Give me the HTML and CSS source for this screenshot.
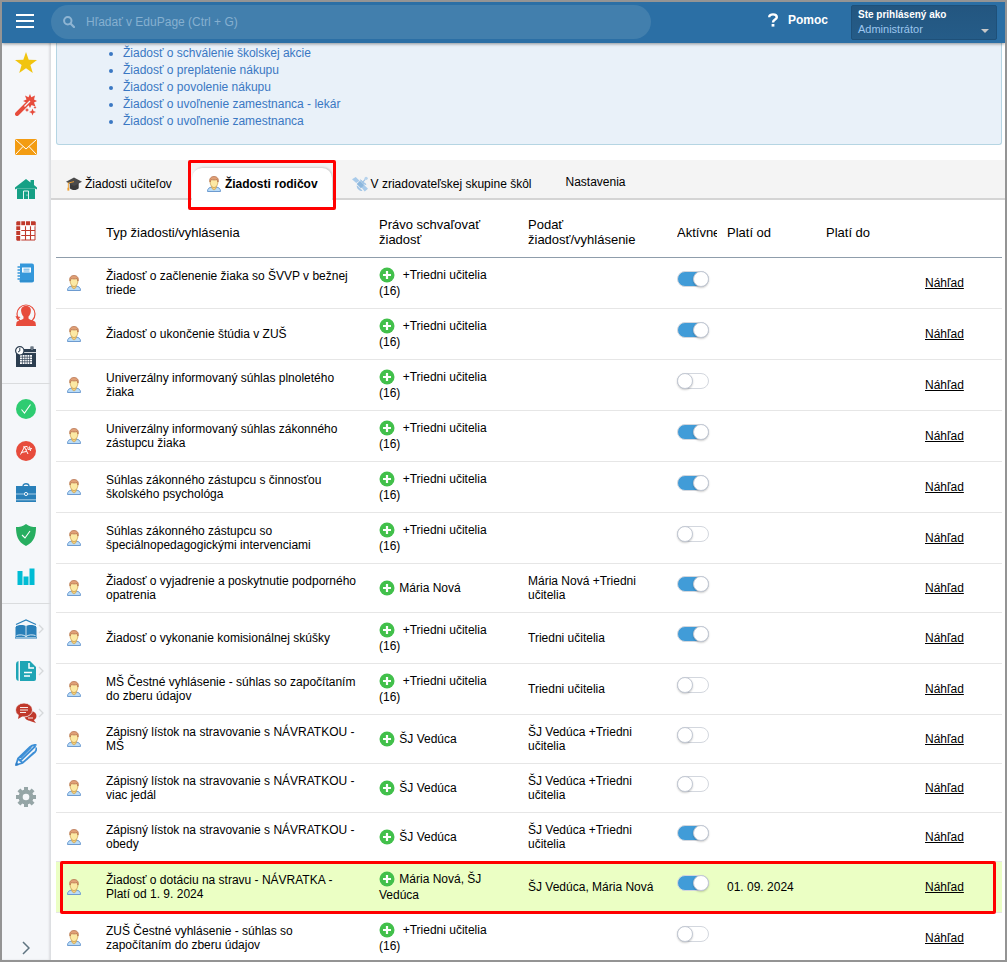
FILE: index.html
```
<!DOCTYPE html>
<html lang="sk">
<head>
    <meta charset="UTF-8">
    <meta name="viewport" content="width=device-width, initial-scale=1.0">
    <title>EduPage - Žiadosti rodičov</title>
    <link rel="stylesheet" href="styles.css">
</head>
<body>
    <!-- shared icons -->
    <svg class="sprite" aria-hidden="true">
        <symbol id="person" viewBox="0 0 16 16">
            <path d="M1.500 15.500c0-3 1.500-4 4.500-4.500h4c3 .5 4.500 1.500 4.500 4.500z" fill="#b9dcf8" stroke="#6d9bd0"/>
            <path d="M5.500 10.500h5l-.5 2-2 1.500-2-1.500z" fill="#f3cf7c" stroke="#c9963e" stroke-width=".6"/>
            <path d="M4 4.500c0-4 8-4 8 0 0 4-1.500 7-4 7s-4-3-4-7z" fill="#fce9a4" stroke="#c99a4b" stroke-width=".8"/>
            <path d="M4 6C3 2 5.500.5 8 .5S13 2 12 6c-.5-1-.7-1.500-1-2.500-1.700.6-4 .6-5.600 0C5 4.500 4.500 5 4 6z" fill="#e0a077" stroke="#b26b48" stroke-width=".7"/>
        </symbol>
        <symbol id="plus" viewBox="0 0 16 16">
            <circle cx="8" cy="8" r="7.500" fill="#42c04b"/>
            <path d="M8 4v8M4 8h8" stroke="#fff" stroke-width="2.200"/>
        </symbol>
        <symbol id="more" viewBox="0 0 6 10">
            <path d="M1 1l4 4-4 4" fill="none" stroke="#d5d8da" stroke-width="1.300"/>
        </symbol>
    </svg>

    <header class="topbar">
        <button class="menu-btn" aria-label="Menu"><span></span><span></span><span></span></button>
        <div class="search">
            <svg width="12" height="12" viewBox="0 0 12 12"><circle cx="4.800" cy="4.800" r="3.700" fill="none" stroke="#8fb5d3" stroke-width="2"/><path d="M7.500 7.500l3.500 3.500" stroke="#8fb5d3" stroke-width="2.200" stroke-linecap="round"/></svg>
            <input type="text" placeholder="Hľadať v EduPage (Ctrl + G)" aria-label="Hľadať v EduPage">
        </div>
        <a class="help" href="#">
            <svg width="10" height="14" viewBox="0 0 10 14"><path d="M1.200 4.200C1.200.4 8.800.4 8.800 4.200 8.800 6.600 5 6.500 5 9.500" fill="none" stroke="#fff" stroke-width="2.400"/><rect x="3.600" y="11" width="2.800" height="2.600" fill="#fff"/></svg>
            Pomoc
        </a>
        <button class="user">
            <strong>Ste prihlásený ako</strong>
            <span class="user-name">Administrátor</span>
        </button>
    </header>

    <div class="layout">
        <nav class="sidebar">
            <div class="group">
                <a href="#" aria-label="Obľúbené"><svg viewBox="0 0 22 22"><path d="M11 0l2.700 7.800 8.300.2-6.600 5 2.400 8-6.800-4.700L4.200 21l2.400-8L0 8l8.300-.2z" fill="#f1c40f"/></svg></a>
                <a href="#" aria-label="Sprievodca"><svg viewBox="0 0 22 22"><path d="M2 20L13 9" stroke="#e74c3c" stroke-width="4" stroke-linecap="round"/><path d="M15 0l1.300 3.200L20 1.500l-1 4 3 1.500-3 1.500 1.500 4-4-1.500-1.500 3-1.500-3-3 1 1-3.500L8 7l3.500-1.500L10 1.500l3.500 1.700z" fill="#e74c3c"/><path d="M9.500 12.500L15 7" stroke="#f5f7fa" stroke-width="1.200"/><path d="M17.500 14.500l1 2.500 2.500 1-2.500 1-1 2.500-1-2.500-2.500-1 2.500-1zM12 14l.7 1.300 1.300.7-1.300.7L12 18l-.7-1.300L10 16l1.300-.7zM20 12l.5 1 1 .5-1 .5-.5 1-.5-1-1-.5 1-.5z" fill="#e74c3c"/></svg></a>
                <a href="#" aria-label="Správy"><svg viewBox="0 0 22 22"><rect y="3" width="22" height="16" fill="#f39c12"/><path d="M.5 3.500L11 13 21.500 3.500M.5 18.500L8 10.500M21.500 18.500L14 10.500" fill="none" stroke="#fff" stroke-width="1"/></svg></a>
                <a href="#" aria-label="Škola"><svg viewBox="0 0 22 22"><path d="M2 10.500h18V21H2z" fill="#16a085"/><path d="M0 11.500v-2L11 1l4.500 3.500V2H19v5l3 2.500v2l-2-1H2z" fill="#16a085"/><path d="M8.500 21v-8h5v8" fill="none" stroke="#fff" stroke-width=".9"/><circle cx="12" cy="17" r=".6" fill="#fff"/></svg></a>
                <a href="#" aria-label="Rozvrh"><svg viewBox="0 0 22 22"><path d="M2 2h18v18H2z" fill="#fff" stroke="#c0392b"/><path d="M1.500 1.500h19v4h-19zM1.500 1.500h4v19h-4z" fill="#c0392b"/><path d="M6 10.500h14M6 15.500h14M10.500 6v14M15.500 6v14" stroke="#c0392b" stroke-width="1.100"/><path d="M1 5.800h19.500M1 10.500h5M1 15.500h5M5.800 1v20M10.500 1v4.500M15.500 1v4.500" stroke="#fff" stroke-width=".9"/></svg></a>
                <a href="#" aria-label="Triedna kniha"><svg viewBox="0 0 22 22"><path d="M5 1.500h12a2 2 0 0 1 2 2v15a2 2 0 0 1-2 2H5z" fill="#3498db"/><path d="M2.500 5H6M2.500 8H6M2.500 11H6M2.500 14H6M2.500 17H6" stroke="#3498db" stroke-width="1.400"/><path d="M7 5.500h9v5H7z" fill="#fff"/><path d="M8.500 7.200h6M8.500 9h6" stroke="#3498db" stroke-width=".8"/><path d="M4 19h14.500" stroke="#2980b9" stroke-width=".7"/></svg></a>
                <a href="#" aria-label="Dochádzka"><svg viewBox="0 0 22 22"><circle cx="11" cy="10" r="9" fill="none" stroke="#e74c3c" stroke-width="1.200"/><path d="M11 2c-4 0-5.300 2.500-4.800 5.500.3 2.500 1.300 4 2.300 5v2c-1 1.500-6.500 2-7 4L1 22h20l-.5-3.500c-.5-2-6-2.500-7-4v-2c1-1 2-2.500 2.300-5C16.300 4.500 15 2 11 2z" fill="#e74c3c"/><path d="M.5 12l1.800 4 3.200-3z" fill="#e74c3c"/></svg></a>
                <a href="#" aria-label="Kalendár"><svg viewBox="0 0 22 22"><path d="M1 3h20v18H1z" fill="#2c3e50"/><path d="M9 6.500h12" stroke="#fff" stroke-width=".8"/><path d="M17 .5v4" stroke="#2c3e50" stroke-width="3"/><path d="M17 1v3" stroke="#aab2b9" stroke-width="1"/><path d="M5 9h12v9H5z" fill="#fff"/><path d="M5 11.200h12M5 13.500h12M5 15.800h12M7.400 9v9M9.800 9v9M12.200 9v9M14.600 9v9" stroke="#2c3e50" stroke-width=".7"/><circle cx="4.800" cy="4.800" r="4.200" fill="#fff" stroke="#2c3e50" stroke-width="1.200"/><path d="M4.800 2v3L3 6" fill="none" stroke="#2c3e50"/></svg></a>
            </div>
            <div class="group">
                <a href="#" aria-label="Schválené"><svg viewBox="0 0 22 22"><circle cx="11" cy="11" r="10" fill="#2ecc71"/><path d="M6.500 11.500l3 3.500 6-8.500" fill="none" stroke="#fff" stroke-width="1.100"/></svg></a>
                <a href="#" aria-label="Známky"><svg viewBox="0 0 22 22"><circle cx="11" cy="11" r="10" fill="#e74c3c"/><path d="M5.500 14.500L9.500 7l3.500 7M6 12.500l5.500-1M13 9.500l4-1M14.500 6.500l1 4.500M8 7l4-.5c2 1 1 2.500-1 3.500" fill="none" stroke="#fff" stroke-width="1"/></svg></a>
                <a href="#" aria-label="Agenda"><svg viewBox="0 0 22 22"><path d="M8 4c0-3 6-3 6 0" fill="none" stroke="#2980b9" stroke-width="1.300"/><path d="M1 4h20v16H1z" fill="#2980b9"/><path d="M1 12h8.500M12.500 12H21M1 17.800h20" stroke="#c8deee" stroke-width=".8"/><circle cx="11" cy="12" r="1.600" fill="#2980b9" stroke="#fff" stroke-width=".9"/></svg></a>
                <a href="#" aria-label="Bezpečnosť"><svg viewBox="0 0 22 22"><path d="M11 0c3 2.500 6.500 3 10 3 0 8-1.500 15-10 19C2.500 18 1 11 1 3c3.500 0 7-.5 10-3z" fill="#27ae60"/><path d="M7 11l3 3 5-7" fill="none" stroke="#fff" stroke-width="1.100"/></svg></a>
                <a href="#" aria-label="Štatistiky"><svg viewBox="0 0 22 22"><path d="M2.500 5h5v14h-5zM8.500 10.500h5V19h-5zM14.500 2.500h5V19h-5z" fill="#00bcd4"/></svg></a>
            </div>
            <div class="group">
                <a href="#" aria-label="Učivo"><svg viewBox="0 0 22 22"><path d="M1 6.500L11 2l10 4.500" fill="none" stroke="#2980b9" stroke-width="1.200"/><path d="M1 8c3-1.500 8-1.500 10 0 2-1.500 7-1.500 10 0v11H1z" fill="#2980b9"/><path d="M11 8v11M1.500 17.500c3-1 7-1 9.500 1 2.500-2 6.500-2 9.500-1" fill="none" stroke="#fff" stroke-width=".8"/><path d="M0 9v11h22V9" fill="none" stroke="#2980b9" stroke-width="1"/></svg><svg class="more"><use href="#more"/></svg></a>
                <a href="#" aria-label="Testy"><svg viewBox="0 0 22 22"><path d="M3.500 1v20A3 3 0 0 1 1 18V4a3 3 0 0 1 2.500-3z" fill="#1fa5b5"/><path d="M5 1h10l6 6v12a2 2 0 0 1-2 2H5z" fill="#1fa5b5"/><path d="M14 3v5h5" fill="none" stroke="#fff" stroke-width="1.500"/><path d="M9 12.500h8M9 16h6" stroke="#fff" stroke-width="1.600"/></svg><svg class="more"><use href="#more"/></svg></a>
                <a href="#" aria-label="Komunikácia"><svg viewBox="0 0 22 22"><ellipse cx="15.500" cy="14" rx="6" ry="5" fill="#c0392b"/><path d="M18 17l3 4-6-2z" fill="#c0392b"/><ellipse cx="9" cy="8" rx="8.500" ry="7" fill="#c0392b" stroke="#f5f7fa" stroke-width=".8"/><path d="M4 12l-1 5 5-3z" fill="#c0392b"/><path d="M5 5.500h8M5 8h8M5 10.500h6M13 16h5" stroke="#fff" stroke-width=".9"/></svg><svg class="more"><use href="#more"/></svg></a>
                <a href="#" aria-label="Upraviť"><svg viewBox="0 0 22 22"><path d="M1 21l2-6.500L15 3C17 1 19 .8 21.500.8M1 21l6.500-2L20 8c1.500-1.500 1.500-2.500 1.500-4.500M3 14.500l4.500 4.500M5.500 16.500L20.500 2M11.500 15.500L19 8.500" fill="none" stroke="#3d8fd6" stroke-width="1.800"/><path d="M4 13.500L15 3l2 .5L6 14.500z" fill="#3d8fd6"/><path d="M0 22l1.200-4 2.800 3z" fill="#2f7cc4"/></svg></a>
                <a href="#" aria-label="Nastavenia"><svg viewBox="0 0 22 22"><g fill="#95a5a6"><circle cx="11" cy="11" r="7.500"/><path d="M9 1h4v20H9z"/><path d="M1 9h20v4H1z"/><path d="M2.500 5.300l2.800-2.800 14.200 14.200-2.800 2.800z"/><path d="M16.700 2.500l2.800 2.800L5.300 19.500l-2.800-2.800z"/></g><circle cx="11" cy="11" r="3.300" fill="#f5f7fa"/></svg></a>
            </div>
            <button class="expand" aria-label="Rozbaliť menu"><svg width="8" height="14" viewBox="0 0 8 14"><path d="M1 1l6 6-6 6" fill="none" stroke="#5f7480" stroke-width="1.500"/></svg></button>
        </nav>

        <main>
            <ul class="links">
                <li><a href="#">Žiadosť o schválenie školskej akcie</a></li>
                <li><a href="#">Žiadosť o preplatenie nákupu</a></li>
                <li><a href="#">Žiadosť o povolenie nákupu</a></li>
                <li><a href="#">Žiadosť o uvoľnenie zamestnanca - lekár</a></li>
                <li><a href="#">Žiadosť o uvoľnenie zamestnanca</a></li>
            </ul>

            <div class="tabs">
                <a class="tab" href="#">
                    <svg width="16" height="16" viewBox="0 0 17 16"><path d="M4 7v5.500c2 2.500 7.500 2.500 9.500 0V7z" fill="#3a3a3a"/><path d="M0 5.500L8.500 1 17 5.500 8.500 10z" fill="#4a4a4a"/><path d="M8.500 5.500L2.500 7v6" fill="none" stroke="#f0a030" stroke-width="1"/><path d="M1.500 12h2v3h-2z" fill="#f0a030"/></svg>
                    Žiadosti učiteľov
                </a>
                <a class="tab active" href="#"><svg width="16" height="16"><use href="#person"/></svg>Žiadosti rodičov</a>
                <a class="tab" href="#">
                    <svg width="16" height="16" viewBox="0 0 17 16"><path d="M0 3l4-2.500 4 4L4.500 7zM9.500 11l3.500-2 4 4-3.500 3z" fill="#a9cbea"/><path d="M5 8l3.500-3.500 4.500 4.500-3.500 3.500z" fill="#8db8de"/><path d="M5.500 10c0 3 2.500 5 5 5zM9 3.500c1.500 3 3 4.500 6 5z" fill="#a9cbea" stroke="#9fc3e4"/><path d="M11 6.500l3-3.500" stroke="#9fc3e4" stroke-width="1.300"/><circle cx="15" cy="2" r="1.700" fill="#b5d2ec"/></svg>
                    V zriadovateľskej skupine škôl
                </a>
                <a class="tab plain" href="#">Nastavenia</a>
            </div>

            <table class="requests">
                <colgroup>
                    <col class="col-icon"><col><col class="col-people"><col class="col-people"><col class="col-active"><col class="col-date"><col class="col-date"><col class="col-view">
                </colgroup>
                <thead>
                    <tr>
                        <th></th>
                        <th>Typ žiadosti/vyhlásenia</th>
                        <th>Právo schvaľovať žiadosť</th>
                        <th>Podať žiadosť/vyhlásenie</th>
                        <th><div class="clip">Aktívne</div></th>
                        <th>Platí od</th>
                        <th>Platí do</th>
                        <th></th>
                    </tr>
                </thead>
                <tbody>
                    <tr>
                        <td class="icon"><svg><use href="#person"/></svg></td>
                        <td class="name">Žiadosť o začlenenie žiaka so ŠVVP v bežnej triede</td>
                        <td class="people"><svg><use href="#plus"/></svg> &nbsp;+Triedni učitelia<br>(16)</td>
                        <td></td>
                        <td><input type="checkbox" class="switch" aria-label="Aktívne" checked></td>
                        <td></td><td></td>
                        <td><a href="#">Náhľad</a></td>
                    </tr>
                    <tr>
                        <td class="icon"><svg><use href="#person"/></svg></td>
                        <td class="name">Žiadosť o ukončenie štúdia v ZUŠ</td>
                        <td class="people"><svg><use href="#plus"/></svg> &nbsp;+Triedni učitelia<br>(16)</td>
                        <td></td>
                        <td><input type="checkbox" class="switch" aria-label="Aktívne" checked></td>
                        <td></td><td></td>
                        <td><a href="#">Náhľad</a></td>
                    </tr>
                    <tr>
                        <td class="icon"><svg><use href="#person"/></svg></td>
                        <td class="name">Univerzálny informovaný súhlas plnoletého žiaka</td>
                        <td class="people"><svg><use href="#plus"/></svg> &nbsp;+Triedni učitelia<br>(16)</td>
                        <td></td>
                        <td><input type="checkbox" class="switch" aria-label="Aktívne"></td>
                        <td></td><td></td>
                        <td><a href="#">Náhľad</a></td>
                    </tr>
                    <tr>
                        <td class="icon"><svg><use href="#person"/></svg></td>
                        <td class="name">Univerzálny informovaný súhlas zákonného zástupcu žiaka</td>
                        <td class="people"><svg><use href="#plus"/></svg> &nbsp;+Triedni učitelia<br>(16)</td>
                        <td></td>
                        <td><input type="checkbox" class="switch" aria-label="Aktívne" checked></td>
                        <td></td><td></td>
                        <td><a href="#">Náhľad</a></td>
                    </tr>
                    <tr>
                        <td class="icon"><svg><use href="#person"/></svg></td>
                        <td class="name">Súhlas zákonného zástupcu s činnosťou školského psychológa</td>
                        <td class="people"><svg><use href="#plus"/></svg> &nbsp;+Triedni učitelia<br>(16)</td>
                        <td></td>
                        <td><input type="checkbox" class="switch" aria-label="Aktívne" checked></td>
                        <td></td><td></td>
                        <td><a href="#">Náhľad</a></td>
                    </tr>
                    <tr>
                        <td class="icon"><svg><use href="#person"/></svg></td>
                        <td class="name">Súhlas zákonného zástupcu so špeciálnopedagogickými intervenciami</td>
                        <td class="people"><svg><use href="#plus"/></svg> &nbsp;+Triedni učitelia<br>(16)</td>
                        <td></td>
                        <td><input type="checkbox" class="switch" aria-label="Aktívne"></td>
                        <td></td><td></td>
                        <td><a href="#">Náhľad</a></td>
                    </tr>
                    <tr>
                        <td class="icon"><svg><use href="#person"/></svg></td>
                        <td class="name">Žiadosť o vyjadrenie a poskytnutie podporného opatrenia</td>
                        <td class="people"><svg><use href="#plus"/></svg> Mária Nová</td>
                        <td>Mária Nová +Triedni učitelia</td>
                        <td><input type="checkbox" class="switch" aria-label="Aktívne" checked></td>
                        <td></td><td></td>
                        <td><a href="#">Náhľad</a></td>
                    </tr>
                    <tr>
                        <td class="icon"><svg><use href="#person"/></svg></td>
                        <td class="name">Žiadosť o vykonanie komisionálnej skúšky</td>
                        <td class="people"><svg><use href="#plus"/></svg> &nbsp;+Triedni učitelia<br>(16)</td>
                        <td>Triedni učitelia</td>
                        <td><input type="checkbox" class="switch" aria-label="Aktívne" checked></td>
                        <td></td><td></td>
                        <td><a href="#">Náhľad</a></td>
                    </tr>
                    <tr>
                        <td class="icon"><svg><use href="#person"/></svg></td>
                        <td class="name">MŠ Čestné vyhlásenie - súhlas so započítaním do zberu údajov</td>
                        <td class="people"><svg><use href="#plus"/></svg> &nbsp;+Triedni učitelia<br>(16)</td>
                        <td>Triedni učitelia</td>
                        <td><input type="checkbox" class="switch" aria-label="Aktívne"></td>
                        <td></td><td></td>
                        <td><a href="#">Náhľad</a></td>
                    </tr>
                    <tr>
                        <td class="icon"><svg><use href="#person"/></svg></td>
                        <td class="name">Zápisný lístok na stravovanie s NÁVRATKOU - MŠ</td>
                        <td class="people"><svg><use href="#plus"/></svg> ŠJ Vedúca</td>
                        <td>ŠJ Vedúca +Triedni učitelia</td>
                        <td><input type="checkbox" class="switch" aria-label="Aktívne"></td>
                        <td></td><td></td>
                        <td><a href="#">Náhľad</a></td>
                    </tr>
                    <tr>
                        <td class="icon"><svg><use href="#person"/></svg></td>
                        <td class="name">Zápisný lístok na stravovanie s NÁVRATKOU - viac jedál</td>
                        <td class="people"><svg><use href="#plus"/></svg> ŠJ Vedúca</td>
                        <td>ŠJ Vedúca +Triedni učitelia</td>
                        <td><input type="checkbox" class="switch" aria-label="Aktívne"></td>
                        <td></td><td></td>
                        <td><a href="#">Náhľad</a></td>
                    </tr>
                    <tr>
                        <td class="icon"><svg><use href="#person"/></svg></td>
                        <td class="name">Zápisný lístok na stravovanie s NÁVRATKOU - obedy</td>
                        <td class="people"><svg><use href="#plus"/></svg> ŠJ Vedúca</td>
                        <td>ŠJ Vedúca +Triedni učitelia</td>
                        <td><input type="checkbox" class="switch" aria-label="Aktívne" checked></td>
                        <td></td><td></td>
                        <td><a href="#">Náhľad</a></td>
                    </tr>
                    <tr class="marked">
                        <td class="icon"><svg><use href="#person"/></svg></td>
                        <td class="name">Žiadosť o dotáciu na stravu - NÁVRATKA - Platí od 1. 9. 2024</td>
                        <td class="people"><svg><use href="#plus"/></svg> Mária Nová, ŠJ Vedúca</td>
                        <td>ŠJ Vedúca, Mária Nová</td>
                        <td><input type="checkbox" class="switch" aria-label="Aktívne" checked></td>
                        <td>01. 09. 2024</td><td></td>
                        <td><a href="#">Náhľad</a></td>
                    </tr>
                    <tr>
                        <td class="icon"><svg><use href="#person"/></svg></td>
                        <td class="name">ZUŠ Čestné vyhlásenie - súhlas so započítaním do zberu údajov</td>
                        <td class="people"><svg><use href="#plus"/></svg> &nbsp;+Triedni učitelia<br>(16)</td>
                        <td></td>
                        <td><input type="checkbox" class="switch" aria-label="Aktívne"></td>
                        <td></td><td></td>
                        <td><a href="#">Náhľad</a></td>
                    </tr>
                </tbody>
            </table>
        </main>
    </div>
</body>
</html>
```

FILE: styles.css
```
*,
*::before,
*::after {
    box-sizing: border-box;
}

body {
    margin: 0;
    height: 100vh;
    display: flex;
    flex-direction: column;
    overflow: hidden;
    border: 2px solid #949494;
    background-color: #fff;
    color: #000;
    font-family: "Liberation Sans", Arial, sans-serif;
    font-size: 12px;
    line-height: 14px;
}

a {
    color: inherit;
}

button {
    border: none;
    background: none;
    padding: 0;
    font-family: inherit;
    cursor: pointer;
}

.sprite {
    display: none;
}

/* top bar */
.topbar {
    display: flex;
    align-items: center;
    height: 40px;
    flex-shrink: 0;
    padding-right: 8px;
    background-color: #2b6fa5;
    box-shadow: 0 1px 0 #2b6fa5, 0 2px 3px rgba(0, 0, 0, 0.4);
    position: relative;
    z-index: 2;
}

.menu-btn {
    width: 49px;
    padding: 0 17px 3px 14px;
    display: flex;
    flex-direction: column;
    gap: 4px;
}

.menu-btn span {
    height: 2px;
    background-color: #fff;
}

.search {
    display: flex;
    align-items: center;
    gap: 11px;
    flex: 0 1 600px;
    height: 34px;
    padding: 0 12px;
    border-radius: 17px;
    background-color: #427fad;
}

.search input {
    flex: 1;
    border: none;
    outline: none;
    background: none;
    padding: 0;
    color: #fff;
    font-family: inherit;
    font-size: 12px;
}

.search input::placeholder {
    color: #86b0d0;
    opacity: 1;
}

.help {
    display: flex;
    align-items: center;
    gap: 10px;
    margin-left: auto;
    margin-right: 23px;
    padding-bottom: 4px;
    color: #fff;
    font-weight: bold;
    text-decoration: none;
}

.user {
    position: relative;
    width: 146px;
    height: 35px;
    padding: 0 6px;
    border: 1px solid #1e5079;
    border-radius: 2px;
    background-color: #24598a;
    background-image: linear-gradient(#235680, #255c88);
    color: #fff;
    text-align: left;
    line-height: 14px;
}

.user strong {
    display: block;
    font-size: 10px;
}

.user-name {
    display: block;
    color: #9cc6ee;
    font-size: 11px;
}

.user::after {
    content: "";
    position: absolute;
    right: 7px;
    bottom: 6px;
    border: 4px solid transparent;
    border-top-color: #c8c8c8;
    border-bottom: none;
}

/* sidebar */
.layout {
    display: flex;
    flex: 1;
    min-height: 0;
}

.sidebar {
    display: flex;
    flex-direction: column;
    width: 49px;
    flex-shrink: 0;
    background-color: #f5f7fa;
    box-shadow: inset -2px 0 2px #dcdee1;
}

.group {
    padding: 4px 0 5px;
    border-bottom: 1px solid #dadcde;
}

.group:first-child {
    padding-top: 0;
}

.group:last-of-type {
    border-bottom: none;
}

.group a {
    display: flex;
    align-items: center;
    height: 42px;
    padding-left: 13px;
}

.group svg {
    width: 22px;
    height: 22px;
    flex-shrink: 0;
}

.group .more {
    width: 6px;
    height: 10px;
    margin-left: 1px;
}

.expand {
    margin-top: auto;
    padding-right: 2px;
    height: 22px;
}

/* content */
main {
    flex: 1;
    min-width: 0;
    overflow: hidden;
}

.links {
    margin: 0 3px 15px 5px;
    padding: 3px 0 14px 66px;
    border: 1px solid #b5d5e3;
    border-top: none;
    border-radius: 0 0 3px 3px;
    background-color: #e9f1f9;
    color: #3a78c3;
    line-height: 17px;
}

.links a {
    text-decoration: none;
}

.tabs {
    display: flex;
    align-items: flex-end;
    gap: 6px;
    height: 40px;
    padding-left: 1px;
    background-color: #f4f4f4;
    box-shadow: inset 0 -2px 0 #d4d4d4;
}

.tab {
    display: flex;
    align-items: center;
    gap: 3px;
    height: 32px;
    padding: 0 14px;
    text-decoration: none;
    white-space: nowrap;
}

.tab.plain {
    padding-bottom: 4px;
}

.tab.active {
    position: relative;
    border-radius: 10px 10px 0 0;
    background-color: #fff;
    box-shadow: 1px -1px 2px #d0d0d0;
    font-weight: bold;
}

.tab.active::after {
    content: "";
    position: absolute;
    inset: -8px -4px -10px -4px;
    border: 3px solid #f00;
    border-radius: 2px;
}

/* requests table */
.requests {
    width: calc(100% - 8px);
    margin-left: 5px;
    table-layout: fixed;
    border-spacing: 0;
}

.col-icon { width: 45px; }
.col-people { width: 149px; }
.col-active { width: 50px; }
.col-date { width: 99px; }
.col-view { width: 82px; }

.requests th {
    height: 58px;
    padding: 7px 5px 0;
    border-bottom: 1px solid #8f9dab;
    font-size: 13px;
    font-weight: normal;
    line-height: 15px;
    text-align: left;
}

.requests td {
    height: 49px;
    padding: 0 5px;
    border-bottom: 1px solid #e6e6e6;
}

.clip {
    overflow: hidden;
}

.requests .icon {
    padding-left: 10px;
}

.requests .name {
    padding-right: 16px;
}

.requests td svg {
    display: block;
    width: 16px;
    height: 16px;
}

.requests .people {
    padding: 9px 5px;
    line-height: 16px;
}

.requests .people svg {
    display: inline-block;
    margin-right: 1px;
    vertical-align: -4px;
}

.switch {
    appearance: none;
    display: block;
    width: 32px;
    height: 16px;
    margin: 0 0 8px;
    border: 1px solid #d3d7de;
    border-radius: 8px;
    background-color: #fff;
    cursor: pointer;
}

.switch::before {
    content: "";
    display: block;
    width: 16px;
    height: 16px;
    margin: -1px;
    border: 1px solid #c3c9d4;
    border-radius: 50%;
    background-color: #fff;
    box-shadow: 0 1px 2px rgba(0, 0, 0, 0.2);
}

.switch:checked {
    background-color: #419cd8;
}

.switch:checked::before {
    margin-left: 15px;
}

.marked {
    position: relative;
    background-color: #ebffc4;
}

.marked td:last-child::after {
    content: "";
    position: absolute;
    inset: -1px 6px -1px 4px;
    border: 3px solid #f00;
    border-radius: 2px;
    pointer-events: none;
}
```
